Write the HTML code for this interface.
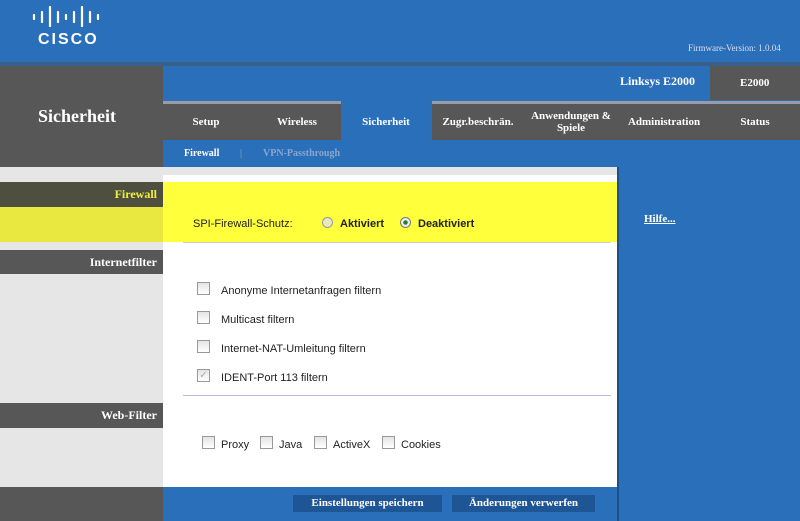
<!DOCTYPE html>
<html><head><style>
*{margin:0;padding:0;box-sizing:border-box}
body{width:800px;height:521px;overflow:hidden;background:#e6e6e6;font-family:"Liberation Serif",serif;position:relative}
.a{position:absolute}
.b{font-weight:bold;color:#fff}
.s{font-family:"Liberation Sans",sans-serif;font-size:11px;color:#222}
.cb{position:absolute;width:13px;height:13px;border:1px solid #999;background:linear-gradient(#e4e4e4,#fff)}
.tab{position:absolute;top:104px;height:36px;font-size:11px;font-weight:bold;color:#fff;text-align:center;display:flex;align-items:center;justify-content:center;line-height:12px}
</style></head><body>
<div class="a" style="left:0;top:0;width:800px;height:62px;background:#2a6fba"></div>
<div class="a" style="left:0;top:62px;width:800px;height:4px;background:#3a5f88"></div>
<svg class="a" style="left:30px;top:4px" width="80" height="42">
<g stroke="#fff" stroke-width="2.2" stroke-linecap="round">
<line x1="4" y1="11" x2="4" y2="15"/><line x1="12" y1="8" x2="12" y2="18"/><line x1="20" y1="3" x2="20" y2="22"/><line x1="28" y1="8" x2="28" y2="18"/><line x1="36" y1="11" x2="36" y2="15"/><line x1="44" y1="8" x2="44" y2="18"/><line x1="52" y1="3" x2="52" y2="22"/><line x1="60" y1="8" x2="60" y2="18"/><line x1="68" y1="11" x2="68" y2="15"/></g>
<text x="8" y="40" fill="#fff" font-family="Liberation Sans" font-weight="bold" font-size="16" letter-spacing="2">CISCO</text></svg>
<div class="a" style="left:688px;top:43px;font-size:9px;color:#dde">Firmware-Version: 1.0.04</div>
<div class="a" style="left:0;top:66px;width:163px;height:101px;background:#575757"></div>
<div class="a b" style="left:38px;top:106px;font-size:18px">Sicherheit</div>
<div class="a" style="left:163px;top:66px;width:637px;height:101px;background:#2a6fba"></div>
<div class="a b" style="left:620px;top:74px;font-size:12px">Linksys E2000</div>
<div class="a" style="left:710px;top:66px;width:90px;height:34px;background:#575757"></div>
<div class="a b" style="left:740px;top:77px;font-size:11px">E2000</div>
<div class="a" style="left:163px;top:101px;width:178px;height:39px;background:#575757;border-top:3px solid #9a9aa8"></div>
<div class="a" style="left:432px;top:101px;width:368px;height:39px;background:#575757;border-top:3px solid #9a9aa8"></div>
<div class="tab" style="left:176px;width:60px">Setup</div>
<div class="tab" style="left:262px;width:70px">Wireless</div>
<div class="tab" style="left:345px;width:82px">Sicherheit</div>
<div class="tab" style="left:434px;width:88px">Zugr.beschrän.</div>
<div class="tab" style="left:522px;width:98px">Anwendungen &amp;<br>Spiele</div>
<div class="tab" style="left:620px;width:88px">Administration</div>
<div class="tab" style="left:720px;width:70px">Status</div>
<div class="a" style="left:184px;top:148px;font-size:10px;color:#fff;font-weight:bold">Firewall</div>
<div class="a" style="left:240px;top:148px;font-size:10px;color:#9ab">|</div>
<div class="a" style="left:263px;top:148px;font-size:10px;color:#8aa6cc;font-weight:bold">VPN-Passthrough</div>
<div class="a" style="left:163px;top:175px;width:454px;height:312px;background:#fff"></div>
<div class="a" style="left:163px;top:182px;width:454px;height:60px;background:#ffff3c"></div>
<div class="a" style="left:617px;top:167px;width:183px;height:354px;background:#2a6fba;border-left:2px solid #1e4f88"></div>
<div class="a" style="left:644px;top:213px;font-size:11px;color:#fff;font-weight:bold;text-decoration:underline">Hilfe...</div>
<div class="a" style="left:0;top:182px;width:163px;height:25px;background:#4f4f40"></div>
<div class="a" style="right:643px;top:187px;font-size:12px;font-weight:bold;color:#f0f040">Firewall</div>
<div class="a" style="left:0;top:207px;width:163px;height:35px;background:#e8e840"></div>
<div class="a" style="left:0;top:250px;width:163px;height:24px;background:#575757"></div>
<div class="a b" style="right:643px;top:255px;font-size:12px">Internetfilter</div>
<div class="a" style="left:0;top:403px;width:163px;height:25px;background:#575757"></div>
<div class="a b" style="right:643px;top:408px;font-size:12px">Web-Filter</div>
<div class="a" style="left:0;top:487px;width:163px;height:34px;background:#575757"></div>
<div class="a s" style="left:193px;top:218px">SPI-Firewall-Schutz:</div>
<div class="a" style="left:322px;top:217px;width:11px;height:11px;border-radius:50%;border:1px solid #999;background:#e8e8c0"></div>
<div class="a s" style="left:340px;top:218px;font-weight:bold">Aktiviert</div>
<div class="a" style="left:400px;top:217px;width:11px;height:11px;border-radius:50%;border:1px solid #777;background:radial-gradient(#2a7a2a 30%,#eee 40%)"></div>
<div class="a s" style="left:418px;top:218px;font-weight:bold">Deaktiviert</div>
<div class="a" style="left:183px;top:242px;width:428px;height:1px;background:#ccc"></div>
<div class="cb" style="left:197px;top:282px"></div><div class="a s" style="left:221px;top:285px">Anonyme Internetanfragen filtern</div>
<div class="cb" style="left:197px;top:311px"></div><div class="a s" style="left:221px;top:314px">Multicast filtern</div>
<div class="cb" style="left:197px;top:340px"></div><div class="a s" style="left:221px;top:343px">Internet-NAT-Umleitung filtern</div>
<div class="cb" style="left:197px;top:369px;color:#aaa;font-size:10px;line-height:11px;text-align:center">✓</div><div class="a s" style="left:221px;top:372px">IDENT-Port 113 filtern</div>
<div class="a" style="left:183px;top:395px;width:428px;height:1px;background:#b8b8e0"></div>
<div class="cb" style="left:202px;top:436px"></div><div class="a s" style="left:221px;top:439px">Proxy</div>
<div class="cb" style="left:260px;top:436px"></div><div class="a s" style="left:279px;top:439px">Java</div>
<div class="cb" style="left:314px;top:436px"></div><div class="a s" style="left:333px;top:439px">ActiveX</div>
<div class="cb" style="left:382px;top:436px"></div><div class="a s" style="left:401px;top:439px">Cookies</div>
<div class="a" style="left:163px;top:487px;width:454px;height:34px;background:#2a6fba"></div>
<div class="a b" style="left:293px;top:495px;width:149px;height:17px;background:#1e5595;font-size:11px;text-align:center;line-height:17px">Einstellungen speichern</div>
<div class="a b" style="left:452px;top:495px;width:143px;height:17px;background:#1e5595;font-size:11px;text-align:center;line-height:17px">Änderungen verwerfen</div>
</body></html>
